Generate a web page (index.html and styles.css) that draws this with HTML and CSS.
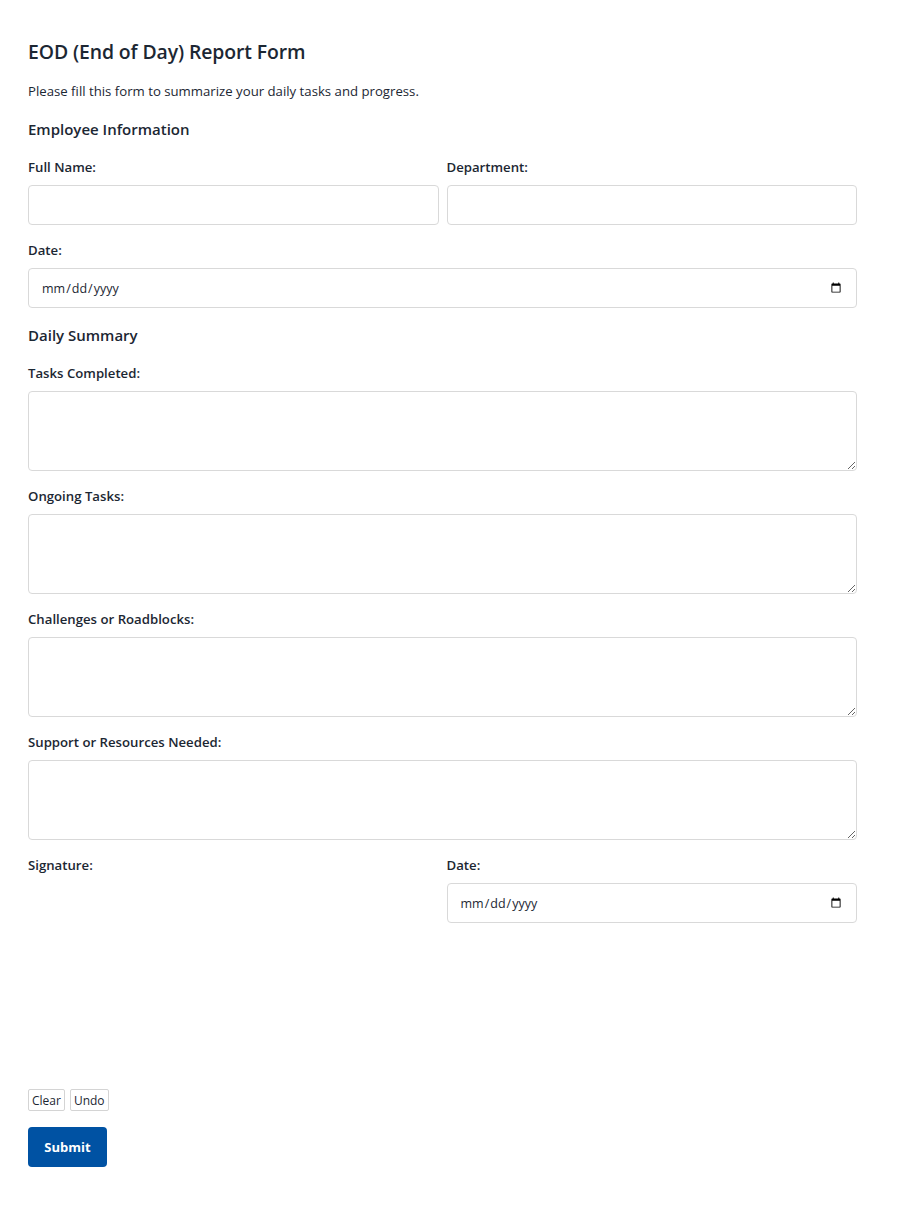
FILE: index.html
```html
<!DOCTYPE html>
<html lang="en">
<head>
<meta charset="utf-8">
<title>EOD Report Form</title>
<link rel="stylesheet" href="styles.css">
</head>
<body>
<div class="page">
  <h1 class="title">EOD (End of Day) Report Form</h1>
  <p class="intro">Please fill this form to summarize your daily tasks and progress.</p>

  <h2 class="section">Employee Information</h2>
  <div class="row">
    <div class="field">
      <label class="label" for="name">Full Name:</label>
      <input class="input" id="name" type="text">
    </div>
    <div class="field">
      <label class="label" for="dept">Department:</label>
      <input class="input" id="dept" type="text">
    </div>
  </div>
  <div class="field">
    <label class="label" for="date1">Date:</label>
    <input class="input" id="date1" type="date">
  </div>

  <h2 class="section">Daily Summary</h2>
  <div class="field">
    <label class="label" for="t1">Tasks Completed:</label>
    <textarea class="textarea" id="t1"></textarea>
  </div>
  <div class="field">
    <label class="label" for="t2">Ongoing Tasks:</label>
    <textarea class="textarea" id="t2"></textarea>
  </div>
  <div class="field">
    <label class="label" for="t3">Challenges or Roadblocks:</label>
    <textarea class="textarea" id="t3"></textarea>
  </div>
  <div class="field">
    <label class="label" for="t4">Support or Resources Needed:</label>
    <textarea class="textarea" id="t4"></textarea>
  </div>

  <div class="row">
    <div class="field">
      <label class="label">Signature:</label>
      <div class="sigpad"></div>
    </div>
    <div class="field">
      <label class="label" for="date2">Date:</label>
      <input class="input" id="date2" type="date">
    </div>
  </div>

  <div class="sigtools">
    <button class="small-btn" type="button">Clear</button>
    <button class="small-btn" type="button">Undo</button>
  </div>

  <button class="submit" type="submit">Submit</button>
</div>
</body>
</html>
```
FILE: styles.css
```css
* { box-sizing: border-box; }
html, body { margin: 0; padding: 0; background: #ffffff; }
body {
  font-family: "Open Sans", "Noto Sans", "Liberation Sans", sans-serif;
  color: #1c2733;
}
.page {
  width: 857px;
  padding: 39px 0 40px 28px;
}
.title {
  margin: 0;
  font-size: 19.4px;
  line-height: 26px;
  font-weight: 600;
  letter-spacing: -0.1px;
}
.intro {
  margin: 18px 0 19px;
  font-size: 13.2px;
  line-height: 17px;
}
.section {
  margin: 17px 0 18px;
  font-size: 15px;
  line-height: 21px;
  font-weight: 600;
}
.row {
  display: grid;
  grid-template-columns: 1fr 1fr;
  gap: 8px;
}
.field { margin-bottom: 16px; }
.row .field { min-width: 0; }
.label {
  display: block;
  font-size: 13.2px;
  line-height: 18px;
  font-weight: 600;
  margin-bottom: 9px;
}
.input, .textarea {
  display: block;
  width: 100%;
  border: 1px solid #d9d9d9;
  border-radius: 4px;
  background: #fff;
  font-family: inherit;
  font-size: 12.5px;
  color: #1c2733;
  outline: none;
}
.input {
  height: 40px;
  padding: 0 12px;
}
.textarea {
  height: 80px;
  padding: 8px 12px;
  resize: vertical;
}
.sigpad {
  height: 200px;
  background: #fff;
}
.sigtools {
  display: flex;
  gap: 5px;
  margin-top: -10px;
}
.small-btn {
  height: 22px;
  padding: 0 3px;
  font-family: inherit;
  font-size: 12px;
  color: #1c2733;
  background: #fff;
  border: 1px solid #d4d4d4;
  border-radius: 2px;
}
.submit {
  display: block;
  margin-top: 16px;
  height: 40px;
  width: 79px;
  padding: 0;
  border: none;
  border-radius: 4px;
  background: #0052a3;
  color: #fff;
  font-family: inherit;
  font-size: 13px;
  font-weight: 700;
}
```
